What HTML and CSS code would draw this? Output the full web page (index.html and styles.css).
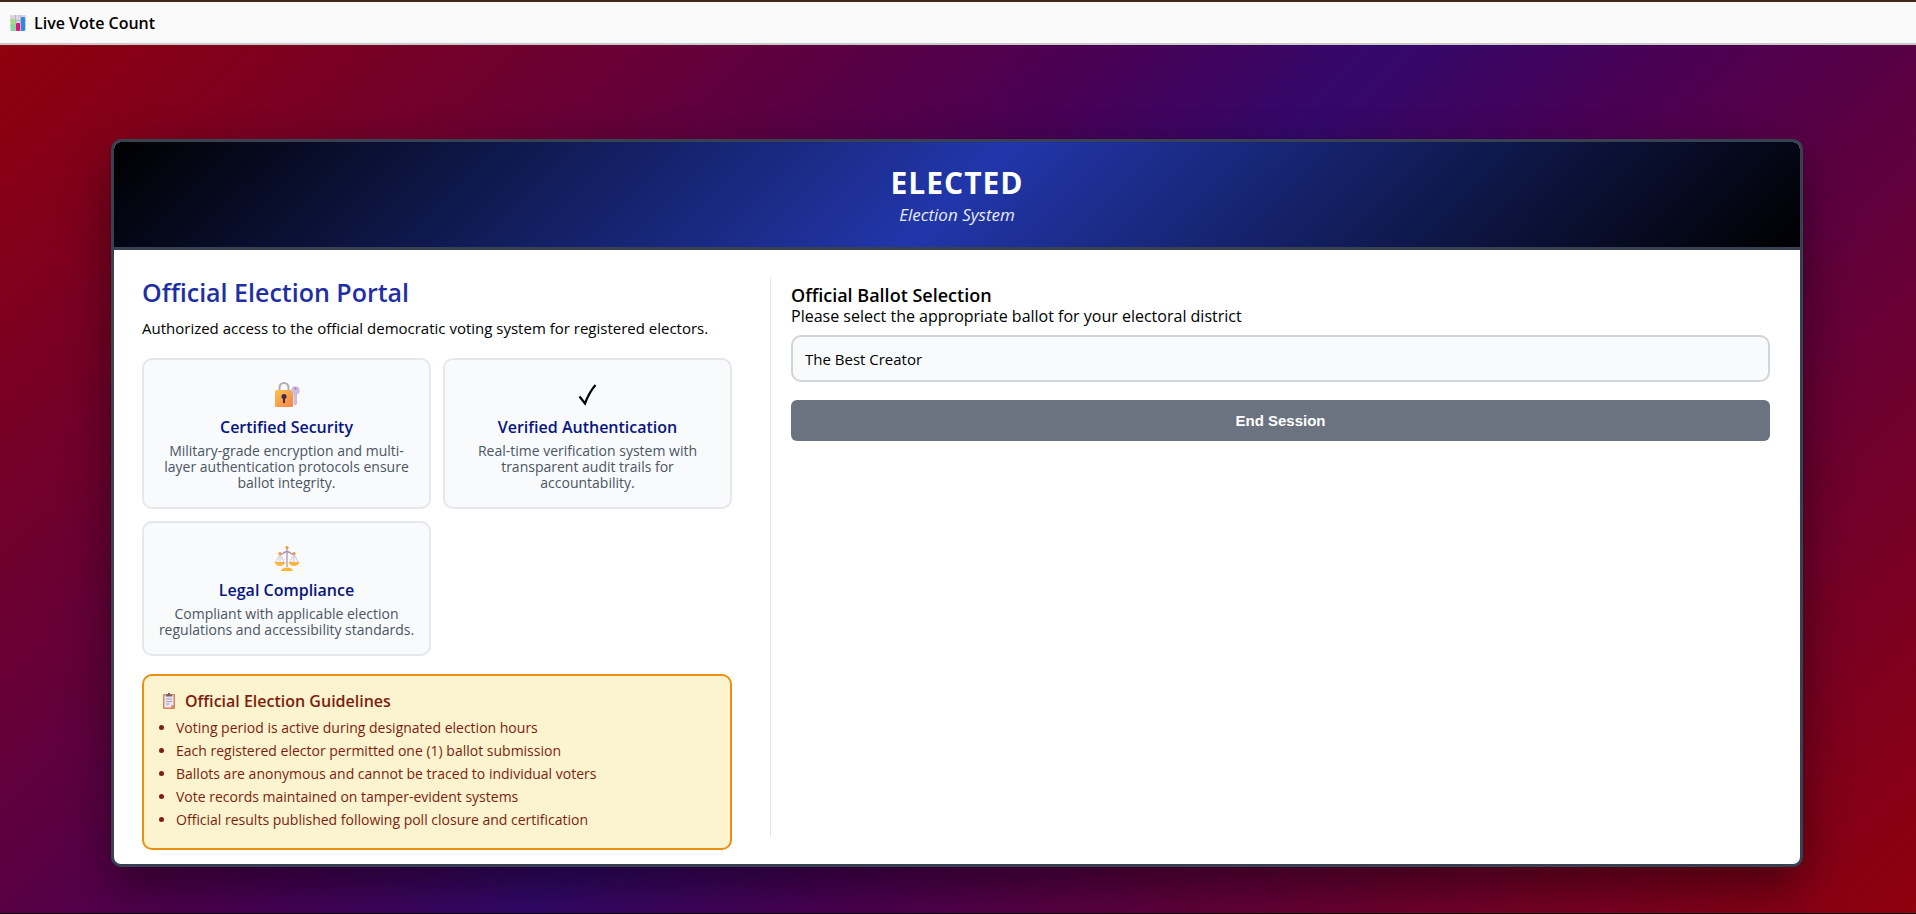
FILE: index.html
```html
<!DOCTYPE html>
<html lang="en">
<head>
<meta charset="utf-8">
<title>Elected</title>
<meta name="viewport" content="width=device-width, initial-scale=1">
<link rel="stylesheet" href="styles.css">
</head>
<body>
<nav class="topbar">
  <a class="topbar-link" href="#votes">
    <svg class="icon-chart" viewBox="0 0 16 16" aria-hidden="true">
      <rect width="16" height="16" rx="1" fill="#d9d3e3"/>
      <path d="M0 5.500h16M0 10.500h16M5.500 0v16M10.500 0v16" stroke="#bcb3cb" fill="none"/>
      <rect x="1" y="4" width="4" height="12" fill="#9be56f"/>
      <rect x="1" y="9" width="4" height="7" fill="#7fe08c"/>
      <rect x="6" y="8" width="4" height="8" rx="1" fill="#e0127d"/>
      <rect x="11" y="2" width="4" height="14" rx="1" fill="#2a8bd8"/>
    </svg>
    <span>Live Vote Count</span>
  </a>
</nav>
<main class="stage">
  <div class="panel">
    <header class="banner">
      <h1 class="banner-title">ELECTED</h1>
      <p class="banner-subtitle">Election System</p>
    </header>
    <div class="content">
      <section class="portal">
        <h2 class="portal-title">Official Election Portal</h2>
        <p class="portal-lead">Authorized access to the official democratic voting system for registered electors.</p>
        <div class="features">
          <article class="feature">
            <svg class="feature-icon" viewBox="0 0 26 26" aria-hidden="true">
              <defs><linearGradient id="gold" x1="0" y1="0" x2="1" y2="1"><stop offset="0" stop-color="#fcc24a"/><stop offset="1" stop-color="#f5824d"/></linearGradient></defs>
              <path d="M5.500 9V5.500a4.500 4.500 0 0 1 9 0V9" fill="none" stroke="#b3a9bd" stroke-width="2"/>
              <rect x="1" y="8" width="18" height="17" rx="1.500" fill="url(#gold)"/>
              <circle cx="10" cy="14.500" r="2.500" fill="#3b2b4f"/>
              <path d="M9 15h2v6H9z" fill="#3b2b4f"/>
              <circle cx="21.500" cy="8.500" r="4.300" fill="#cbbcdc"/>
              <path d="M19.500 11h3.500v11l-1.500 1.500-2-1.500z" fill="#cbbcdc"/>
              <circle cx="21.500" cy="6.500" r="1" fill="#8d7aa3"/>
            </svg>
            <h3 class="feature-title">Certified Security</h3>
            <p class="feature-text">Military-grade encryption and multi-layer authentication protocols ensure ballot integrity.</p>
          </article>
          <article class="feature">
            <svg class="feature-icon" viewBox="0 0 26 26" aria-hidden="true">
              <path d="M4.500 14.500l5.500 7Q14 10.500 20.500 3" fill="none" stroke="#000" stroke-width="2.200"/>
            </svg>
            <h3 class="feature-title">Verified Authentication</h3>
            <p class="feature-text">Real-time verification system with transparent audit trails for accountability.</p>
          </article>
          <article class="feature">
            <svg class="feature-icon" viewBox="0 0 26 26" aria-hidden="true">
              <path d="M13 3v19" stroke="#b9a3c0" stroke-width="1.500"/>
              <path d="M6 9q3 .5 4-1.500 3-1.500 6 0 1 2 4 1.500" fill="none" stroke="#a891b4" stroke-width="1.500"/>
              <path d="M6 9l-4 8M6 9l4 8M20 9l-4 8M20 9l4 8M6 9v8M20 9v8" stroke="#c6b4cc" stroke-width=".8"/>
              <path d="M.5 17h11q-1.500 4-5.500 4T.5 17zM14.500 17h11q-1.500 4-5.500 4t-5.500-4z" fill="#fbb33f"/>
              <path d="M7 26q1-3.500 6-3.500t6 3.500z" fill="#f9b52b"/>
              <circle cx="13" cy="2.500" r="1.600" fill="#f5973c"/>
              <circle cx="6" cy="8.500" r="1.600" fill="#f5973c"/>
              <circle cx="20" cy="8.500" r="1.600" fill="#f5973c"/>
            </svg>
            <h3 class="feature-title">Legal Compliance</h3>
            <p class="feature-text">Compliant with applicable election regulations and accessibility standards.</p>
          </article>
        </div>
        <aside class="guidelines">
          <h3 class="guidelines-title">
            <svg class="icon-clipboard" viewBox="0 0 16 16" aria-hidden="true">
              <rect x="2" y="1" width="12" height="15" rx="1" fill="#d98758"/>
              <path d="M3.500 2.500h9V12L10 14.500H3.500z" fill="#ece6f3"/>
              <path d="M12.500 12H10v2.500z" fill="#b9a6d0"/>
              <path d="M5 6h6M5 8.500h6M5 11h3.500" stroke="#a89ab8"/>
              <path d="M5 1.500h2V0h2v1.500h2v2H5z" fill="#6c6174"/>
            </svg>
            <span>Official Election Guidelines</span>
          </h3>
          <ul class="guidelines-list">
            <li>Voting period is active during designated election hours</li>
            <li>Each registered elector permitted one (1) ballot submission</li>
            <li>Ballots are anonymous and cannot be traced to individual voters</li>
            <li>Vote records maintained on tamper-evident systems</li>
            <li>Official results published following poll closure and certification</li>
          </ul>
        </aside>
      </section>
      <section class="ballot">
        <h2 class="ballot-title">Official Ballot Selection</h2>
        <label class="ballot-label" for="ballot">Please select the appropriate ballot for your electoral district</label>
        <select class="ballot-select" id="ballot">
          <option>The Best Creator</option>
        </select>
        <button class="end-session" type="button">End Session</button>
      </section>
    </div>
  </div>
</main>
</body>
</html>
```
FILE: styles.css
```css
* {
  box-sizing: border-box;
  margin: 0;
  padding: 0;
}

body {
  display: flex;
  flex-direction: column;
  min-height: 100vh;
  font-family: "Trebuchet MS", "Open Sans", sans-serif;
  font-size: 15px;
  line-height: 20px;
  color: #000;
  border-bottom: 1px solid #000;
}

.topbar {
  display: flex;
  padding: 11px 10px 10px;
  background: #fafafa;
  border-top: 2px solid #43291a;
  border-bottom: 2px solid #c8c8c8;
}

.topbar-link {
  display: flex;
  align-items: center;
  gap: 8px;
  font-size: 16px;
  font-weight: 600;
  color: inherit;
  text-decoration: none;
}

.icon-chart,
.icon-clipboard {
  width: 16px;
  height: 16px;
}

.stage {
  flex: 1;
  padding: 94px 113px 46px 111px;
  background: linear-gradient(135deg, #90000c, #4b0052 39%, #33086b 50%, #4b0052 61%, #90000c);
}

.panel {
  overflow: hidden;
  background: #fff;
  border: 3px solid #374151;
  border-radius: 10px;
  box-shadow: 0 20px 48px rgba(0, 0, 0, 0.45);
}

.banner {
  padding: 22px 24px;
  text-align: center;
  color: #fff;
  background: linear-gradient(135deg, #000, #2136aa 50%, #000);
  border-bottom: 3px solid #374151;
}

.banner-title {
  font-size: 30px;
  line-height: 38px;
  font-weight: 700;
  letter-spacing: 1px;
}

.banner-subtitle {
  padding-top: 3px;
  font-size: 17px;
  font-style: italic;
  opacity: 0.9;
}

.content {
  display: grid;
  grid-template-columns: 59fr 100fr;
  gap: 38px;
  padding: 28px 30px 14px 28px;
}

.portal-title {
  font-size: 25px;
  line-height: 29px;
  font-weight: 600;
  color: #1e2fa5;
}

.portal-lead {
  padding-top: 11px;
}

.features {
  display: grid;
  grid-template-columns: 1fr 1fr;
  gap: 12px;
  margin-top: 20px;
}

.feature {
  padding: 22px 14px 16px;
  text-align: center;
  background: #f9fafc;
  border: 2px solid #e5e7eb;
  border-radius: 10px;
}

.feature-icon {
  display: block;
  width: 26px;
  height: 26px;
  margin: 0 auto;
}

.feature-title {
  padding-top: 9px;
  font-size: 16px;
  font-weight: 600;
  color: #07157f;
}

.feature-text {
  padding-top: 6px;
  font-size: 14px;
  line-height: 16px;
  color: #4b5563;
}

.guidelines {
  margin-top: 18px;
  padding: 15px 17px 17px;
  color: #7f1d0d;
  background: #fcf3cf;
  border: 2px solid #ea8f12;
  border-radius: 10px;
}

.guidelines-title {
  display: flex;
  align-items: center;
  gap: 8px;
  font-size: 16px;
  font-weight: 600;
}

.guidelines-list {
  padding: 5px 0 0 15px;
  font-size: 14px;
  line-height: 23px;
}

.ballot {
  display: flex;
  flex-direction: column;
  margin-bottom: 13px;
  padding: 6px 0 0 20px;
  border-left: 1px solid #e5e7eb;
}

.ballot-title {
  font-size: 18px;
  line-height: 22px;
  font-weight: 600;
}

.ballot-label {
  font-size: 16px;
}

.ballot-select {
  height: 47px;
  margin-top: 9px;
  padding: 0 12px;
  font: inherit;
  color: inherit;
  appearance: none;
  background: #f9fafc;
  border: 2px solid #d1d5db;
  border-radius: 10px;
}

.end-session {
  height: 41px;
  margin-top: 18px;
  font-family: Arial, "Liberation Sans", sans-serif;
  font-size: 15px;
  font-weight: 700;
  color: #fff;
  background: #6b7280;
  border: 0;
  border-radius: 6px;
}
```
